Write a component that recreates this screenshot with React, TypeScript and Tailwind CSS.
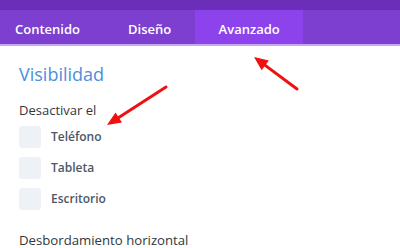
const tabs = ["Contenido", "Diseño", "Avanzado"];
const options = ["Teléfono", "Tableta", "Escritorio"];

const Arrow = ({ x1, y1, x2, y2 }: { x1: number; y1: number; x2: number; y2: number }) => {
  const a = Math.atan2(y2 - y1, x2 - x1);
  const len = 14;
  const w = 6;
  const bx = x2 - Math.cos(a) * len;
  const by = y2 - Math.sin(a) * len;
  const p1 = `${bx + Math.sin(a) * w},${by - Math.cos(a) * w}`;
  const p2 = `${bx - Math.sin(a) * w},${by + Math.cos(a) * w}`;
  return (
    <g>
      <line x1={x1} y1={y1} x2={bx} y2={by} stroke="#f01010" strokeWidth={3} strokeLinecap="round" />
      <polygon points={`${x2},${y2} ${p1} ${p2}`} fill="#f01010" />
    </g>
  );
};

export default function App() {
  return (
    <div className="relative w-[400px] h-[248px] overflow-hidden bg-white font-['Open_Sans',sans-serif]">
      <div className="h-[10px] bg-[#6b2eb8]" />
      <div className="flex h-[36px] bg-[#7c3fcf] border-b-2 border-[#c9a6f2]">
        {tabs.map((t, i) => (
          <div
            key={t}
            className={
              "flex items-center pt-[5px] text-[13px] font-semibold text-white " +
              (i === 0 ? "pl-[15px] pr-[48px] " : "") +
              (i === 1 ? "pr-[24px] " : "") +
              (i === 2 ? "px-[24px] bg-[#8d43ec] w-[108px] justify-center " : "")
            }
          >
            {t}
          </div>
        ))}
      </div>
      <div className="px-[19px] pt-[16px]">
        <div className="text-[18px] leading-[24px] text-[#4b8fdc]">Visibilidad</div>
        <div className="mt-[15px] text-[13px] leading-[18px] text-[#32373c]">Desactivar el</div>
        <div className="mt-[7px] flex flex-col gap-[9px]">
          {options.map((o) => (
            <div key={o} className="flex items-center gap-[10px]">
              <div className="w-[22px] h-[22px] rounded-[3px] bg-[#eef2f7]" />
              <span className="text-[12px] font-semibold text-[#4c5866]">{o}</span>
            </div>
          ))}
        </div>
        <div className="mt-[21px] text-[13.2px] leading-[18px] text-[#32373c]">Desbordamiento horizontal</div>
      </div>
      <svg className="absolute left-0 top-0" width={400} height={248}>
        <Arrow x1={166} y1={87} x2={107} y2={125} />
        <Arrow x1={297} y1={89} x2={254} y2={57} />
      </svg>
    </div>
  );
}
